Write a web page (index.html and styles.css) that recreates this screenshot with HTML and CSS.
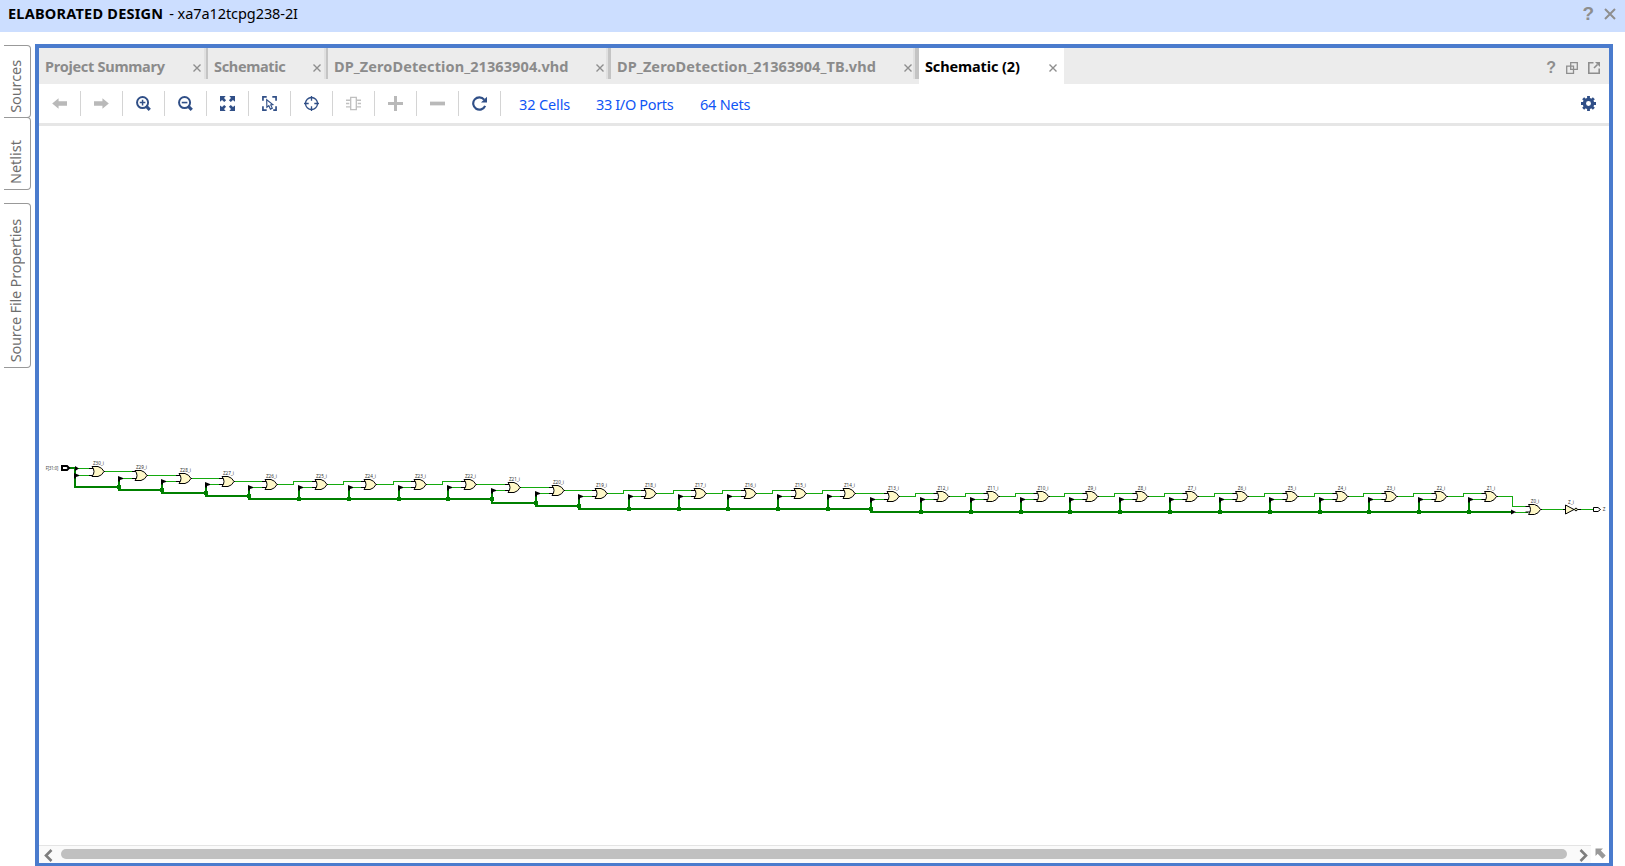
FILE: index.html
```
<!DOCTYPE html>
<html lang="en">
<head>
<meta charset="utf-8">
<title>Elaborated Design</title>
<link rel="stylesheet" href="styles.css">
</head>
<body>
<header class="titlebar">
  <div class="title"><b class="title-name">ELABORATED DESIGN</b><span class="title-part">- xa7a12tcpg238-2I</span></div>
  <div class="title-actions">
    <span class="help-big">?</span>
    <svg width="12" height="12" viewBox="0 0 12 12"><path d="M1 1L11 11M11 1L1 11" stroke="#8e8e8e" stroke-width="2"/></svg>
  </div>
</header>
<div class="workspace">
  <nav class="side">
    <div class="side-tab sources"><span>Sources</span></div>
    <div class="side-tab netlist"><span>Netlist</span></div>
    <div class="side-tab props"><span>Source File Properties</span></div>
  </nav>
  <main class="panel">
    <div class="tabs">
      <div class="tab t1"><span>Project Summary</span><svg class="x" viewBox="0 0 8 8"><path d="M.5 .5L7.500 7.500M7.500 .5L.5 7.500"/></svg></div>
      <div class="tab t2"><span>Schematic</span><svg class="x" viewBox="0 0 8 8"><path d="M.5 .5L7.500 7.500M7.500 .5L.5 7.500"/></svg></div>
      <div class="tab t3"><span>DP_ZeroDetection_21363904.vhd</span><svg class="x" viewBox="0 0 8 8"><path d="M.5 .5L7.500 7.500M7.500 .5L.5 7.500"/></svg></div>
      <div class="tab t4"><span>DP_ZeroDetection_21363904_TB.vhd</span><svg class="x" viewBox="0 0 8 8"><path d="M.5 .5L7.500 7.500M7.500 .5L.5 7.500"/></svg></div>
      <div class="tab t5 active"><span>Schematic (2)</span><svg class="x" viewBox="0 0 8 8"><path d="M.5 .5L7.500 7.500M7.500 .5L.5 7.500"/></svg></div>
      <div class="tab-actions">
        <span class="help-small">?</span>
        <svg width="12" height="12" viewBox="0 0 12 12" fill="none" stroke="#8e8e8e" stroke-width="1.300"><path d="M4.700 .7H11.300V7.300H4.700ZM.7 4.200H7.500V11.300H.7Z"/></svg>
        <svg width="12" height="12" viewBox="0 0 12 12" fill="none" stroke="#8e8e8e" stroke-width="1.600"><path d="M5.500 .8H.8V11.200H11.200V6.500M6 6L9.500 2.500"/><path d="M7 0H12V5Z" fill="#8e8e8e" stroke="none"/></svg>
      </div>
    </div>
    <div class="toolbar">
      <div class="tool"><svg viewBox="0 0 16 16"><path d="M.2 8L7 2.300V5.500H16V10.500H7V13.700Z" fill="#b9b9b9"/></svg></div>
      <div class="tool"><svg viewBox="0 0 16 16"><path d="M15.800 8L9 2.300V5.500H0V10.500H9V13.700Z" fill="#b9b9b9"/></svg></div>
      <div class="tool"><svg viewBox="0 0 16 16" fill="none" stroke="#304f87"><circle cx="7" cy="7" r="5.900" stroke-width="2.100"/><path d="M7 4V10M4 7H10" stroke-width="1.600"/><path d="M11.300 11.300L14.700 14.700" stroke-width="3.300"/></svg></div>
      <div class="tool"><svg viewBox="0 0 16 16" fill="none" stroke="#304f87"><circle cx="7" cy="7" r="5.900" stroke-width="2.100"/><path d="M4 7H10" stroke-width="1.700"/><path d="M11.300 11.300L14.700 14.700" stroke-width="3.300"/></svg></div>
      <div class="tool"><svg viewBox="0 0 16 16"><path d="M0 0H6L4.300 2.200L6.500 4.500L4.500 6.500L2.200 4.300L0 6ZM16 0V6L13.800 4.300L11.500 6.500L9.500 4.500L11.700 2.200L10 0ZM0 16V10L2.200 11.700L4.500 9.500L6.500 11.500L4.300 13.800L6 16ZM16 16H10L11.700 13.800L9.500 11.500L11.500 9.500L13.800 11.700L16 10Z" fill="#304f87"/></svg></div>
      <div class="tool"><svg viewBox="0 0 16 16" fill="none" stroke="#304f87"><path d="M1 5V1H5M11 1H15V5M15 11V15H12M5 15H1V11" stroke-width="1.800"/><path d="M5 4L5.200 12L7.300 10.300L9 14L11 13L9.300 9.600L11.600 9.200Z" stroke-width="1.200"/></svg></div>
      <div class="tool"><svg viewBox="0 0 16 16" fill="none" stroke="#304f87" stroke-width="1.400"><circle cx="8" cy="8" r="6.400"/><path d="M8 0V5M8 11V16M0 8H5M11 8H16"/></svg></div>
      <div class="tool"><svg viewBox="0 0 16 16" fill="none" stroke="#c0c0c0" stroke-width="1.400"><path d="M5 1.500H11V14.500H5ZM0 4.500H5M0 8H3.500M0 11.500H5M11 4.500H16M12.500 8H16M11 11.500H16"/></svg></div>
      <div class="tool"><svg viewBox="0 0 16 16"><path d="M8 0V16M0 8H16" stroke="#b9b9b9" stroke-width="3.200"/></svg></div>
      <div class="tool"><svg viewBox="0 0 16 16"><path d="M0 8H16" stroke="#b9b9b9" stroke-width="4"/></svg></div>
      <div class="tool"><svg viewBox="0 0 16 16"><path d="M14 10.500A6.600 6.600 0 1 1 13 3.800" fill="none" stroke="#304f87" stroke-width="2.300"/><path d="M16 .8V7H9.600Z" fill="#304f87"/></svg></div>
      <div class="links"><a class="l1">32 Cells</a><a class="l2">33 I/O Ports</a><a class="l3">64 Nets</a></div>
      <svg class="gear" viewBox="0 0 16 16"><g fill="none" stroke="#304f87"><circle cx="8" cy="8" r="4.400" stroke-width="3.500"/><path d="M8 0V3M8 13V16M0 8H3M13 8H16M2.300 2.300L4.500 4.500M11.500 11.500L13.700 13.700M2.300 13.700L4.500 11.500M11.500 4.500L13.700 2.300" stroke-width="3"/></g></svg>
    </div>
    <div class="canvas">
      <svg id="schematic" width="1570" height="718" viewBox="39 126 1570 718"></svg>
    </div>
    <div class="scroll">
      <div class="scrollbar">
        <svg width="9" height="13" viewBox="0 0 9 13"><path d="M7.500 1L2 6.500L7.500 12" fill="none" stroke="#7d7d7d" stroke-width="2.600"/></svg>
        <div class="thumb"></div>
        <svg width="9" height="13" viewBox="0 0 9 13"><path d="M1.500 1L7 6.500L1.500 12" fill="none" stroke="#7d7d7d" stroke-width="2.600"/></svg>
      </div>
      <svg class="corner" width="11" height="11" viewBox="0 0 11 11"><path d="M.5 .5H8L5.800 2.600L10.700 7.500L7.500 10.700L2.700 5.800L.5 8Z" fill="#999"/></svg>
    </div>
  </main>
</div>
<script src="schematic.js"></script>
</body>
</html>
```
FILE: styles.css
```
* { box-sizing: border-box; }
body { margin: 0; height: 866px; overflow: hidden; background: #fff; font-family: "Noto Sans", "Open Sans", sans-serif; font-size: 14.5px; color: #000; display: flex; flex-direction: column; }
svg { display: block; flex: none; }
.titlebar { height: 32px; flex: none; background: #ccdeff; display: flex; justify-content: space-between; padding: 0 9px 0 8px; }
.title { display: flex; gap: 5px; line-height: 26px; white-space: nowrap; }
.title-name { letter-spacing: .23px; }
.title-part { letter-spacing: -.08px; padding-left: 1px; }
.title-actions { display: flex; gap: 10px; height: 27px; align-items: center; }
.help-big { font: bold 19px "Liberation Sans", sans-serif; color: #8e8e8e; }
.workspace { flex: 1; min-height: 0; display: flex; padding-top: 12px; }
.side { width: 35px; flex: none; padding: 1px 4px 0; }
.side-tab { width: 27px; border: 1px solid #999; border-left: 0; border-radius: 0 4px 4px 0; display: flex; align-items: flex-end; color: #6e6e6e; line-height: 22px; }
.side-tab span { writing-mode: vertical-rl; transform: rotate(180deg); white-space: nowrap; }
.sources { height: 73px; padding-bottom: 4px; letter-spacing: -.1px; }
.netlist { height: 73px; margin-top: -1px; padding-bottom: 5px; }
.props { height: 165px; margin-top: 13px; padding-bottom: 5px; letter-spacing: -.2px; }
.panel { width: 1578px; height: 822px; border: 4px solid #4a7bcd; border-bottom-width: 3px; display: flex; flex-direction: column; }
.tabs { height: 36px; flex: none; background: #ececec; display: flex; }
.tab { height: 31px; display: flex; align-items: center; justify-content: space-between; padding: 2px 5px 0 6px; border-right: 2px solid #c4c4c4; box-shadow: inset -2px 0 #e0e0e0; font-weight: bold; color: #8b8b8b; white-space: nowrap; }
.tab span { line-height: 26px; margin-top: 2px; }
.x { width: 8px; height: 8px; margin-top: 6px; stroke: #8e8e8e; stroke-width: 1.400; }
.t1 { width: 169px; letter-spacing: -.28px; }
.t2 { width: 120px; letter-spacing: -.34px; }
.t3 { width: 283px; padding-right: 4px; border-right-width: 3px; letter-spacing: .09px; }
.t4 { width: 308px; padding-right: 3px; border-right-width: 4px; letter-spacing: .1px; }
.t5 { width: 145px; letter-spacing: -.13px; }
.active { height: 36px; background: #fff; color: #000; border: 0; box-shadow: none; padding: 0 7px 3px 6px; }
.tab-actions { margin-left: auto; display: flex; gap: 10px; align-items: center; padding: 4px 9px 0 0; }
.help-small { font: bold 16px "Liberation Sans", sans-serif; color: #8e8e8e; }
.toolbar { height: 42px; flex: none; border-bottom: 3px solid #e6e6e6; display: flex; align-items: center; }
.tool { width: 42px; height: 25px; border-right: 1px solid #d4d4d4; display: flex; align-items: center; padding-left: 13px; }
.tool svg { width: 15px; height: 15px; }
.links { display: flex; color: #0f55f5; padding-left: 18px; white-space: nowrap; }
.l1 { width: 77px; letter-spacing: -.12px; }
.l2 { width: 104px; letter-spacing: -.35px; }
.l3 { letter-spacing: -.2px; }
.gear { width: 15px; height: 15px; margin: 0 13px 0 auto; }
.canvas { flex: 1; min-height: 0; overflow: hidden; }
.scroll { height: 18px; flex: none; display: flex; background: #fff; }
.scrollbar { width: 1552px; border-top: 1px solid #e4e4e4; background: #fafafa; display: flex; align-items: center; gap: 8px; padding: 1px 3px 0 5px; }
.thumb { flex: 1; height: 10px; border-radius: 5px; background: #c0c0c0; margin: 0 4px 2px 0; }
.corner { margin: 3px 0 0 4px; }
.wire { fill: none; stroke: #14aa0e; stroke-width: 1; shape-rendering: crispEdges; }
.bus { fill: none; stroke: #008000; stroke-width: 2; shape-rendering: crispEdges; }
.node { fill: #008000; shape-rendering: crispEdges; }
.pin { fill: none; stroke: #000; stroke-width: 1; }
.gate { fill: #fff8c8; stroke: #000; stroke-width: 1; }
.tri { fill: #000; }
.label { font-size: 4.6px; fill: #333; text-anchor: middle; }
```
FILE: schematic.js
```
// Each gate: [index, body left, centre y, bus tap x]
const gates = [
  [30, 93, 471.5, 75], [29, 136, 475.5, 119], [28, 180, 478.5, 162], [27, 223, 481.5, 206],
  [26, 266, 484.5, 249], [25, 316, 484.5, 299], [24, 365, 484.5, 349], [23, 415, 484.5, 399],
  [22, 465, 484.5, 448], [21, 509, 487.5, 492], [20, 553, 490.5, 536], [19, 596, 493.5, 579],
  [18, 645, 493.5, 629], [17, 695, 493.5, 679], [16, 745, 493.5, 728], [15, 795, 493.5, 778],
  [14, 844, 493.5, 828], [13, 888, 496.5, 871]
];
for (let k = 0; k < 12; k++) {
  const tap = Math.round(921 + k * 49.82);
  gates.push([12 - k, tap + 16.5, 496.5, tap]);
}
gates.push([0, 1529.5, 509.5, 1515]);

const busY = { 471.5: 487, 475.5: 490, 478.5: 493, 481.5: 496, 484.5: 499, 487.5: 503, 490.5: 506, 493.5: 509, 496.5: 512, 509.5: 512 };
let out = '';
const path = (cls, d) => { out += `<path class="${cls}" d="${d}"/>`; };
const label = (x, y, text) => { out += `<text class="label" x="${x}" y="${y}">${text}</text>`; };

gates.forEach(([n, x, c, tap], i) => {
  const top = n === 29 ? c - 4 : c - 3, low = c + (n === 30 ? 4 : n === 0 ? 2.5 : 3), by = busY[c];
  const prev = gates[i - 1], next = gates[i + 1];
  if (!prev) {
    path('bus', 'M69 468H76M75 467V488');
    path('wire', `M75 ${top}H${x - 2}`);
    path('tri', `M75 ${top - 2.5}L79 ${top}L75 ${top + 2.5}Z`);
  } else {
    const bend = n === 0 ? 1512.5 : tap - 5.5;
    path('wire', `M${prev[1] + 12} ${prev[2]}H${bend}V${top}H${x - 2}`);
    if (n > 0) path('bus', `M${tap} ${low}V${by + 1}`);
  }
  path('wire', `M${tap} ${low}H${x - 2}`);
  if (next) path('bus', `M${tap - 1} ${by}H${next[3] + (n === 1 ? -2 : 1)}`);
  if (n > 0 && prev) {
    out += `<rect class="node" x="${tap - 2}" y="${busY[prev[2]] - 2}" width="4" height="4"/>`;
  }
  if (n === 0) path('tri', 'M1511 509.5L1516 512L1511 514.500Z');
  else path('tri', `M${tap - 1} ${low - 2.5}L${tap + 4} ${low - 0.5}V${low + .5}L${tap + 1} ${low + 1.5}V${low + 3}H${tap - 1}Z`);
  path('pin', `M${x - 4} ${top}H${x + 1}M${x - 4} ${low}H${x + 1}M${x + 11} ${c}H${x + 14}`);
  path('gate', `M${x - 1} ${c - 5}H${x + 5}Q${x + 9} ${c - 4} ${x + 11} ${c}Q${x + 9} ${c + 4} ${x + 5} ${c + 5}H${x - 1}Q${x + 3} ${c} ${x - 1} ${c - 5}Z`);
  label(x + 5.5, c - 6.5, `Z${n}_i`);
});

// Input port, inverter and output port
out += '<text class="label" x="52" y="469.500" textLength="12.5" lengthAdjust="spacingAndGlyphs">F[31:0]</text>';
out += '<path d="M62 466H67L69 468L67 470H62Z" fill="#fff" stroke="#000" stroke-width="2"/>';
path('wire', 'M1542 509.5H1594');
path('gate', 'M1565.5 505V514L1574 509.5Z');
path('pin', 'M1563 509.5H1566M1578 509.5H1581');
out += '<circle class="gate" cx="1576" cy="509.5" r="1.3"/>';
label(1571, 503.5, 'Z_i');
out += '<path d="M1593.5 507.500H1598L1600.500 509.500L1598 511.500H1593.500Z" fill="#fff" stroke="#000"/>';
label(1604, 511, 'Z');
document.getElementById('schematic').innerHTML = out;
```
